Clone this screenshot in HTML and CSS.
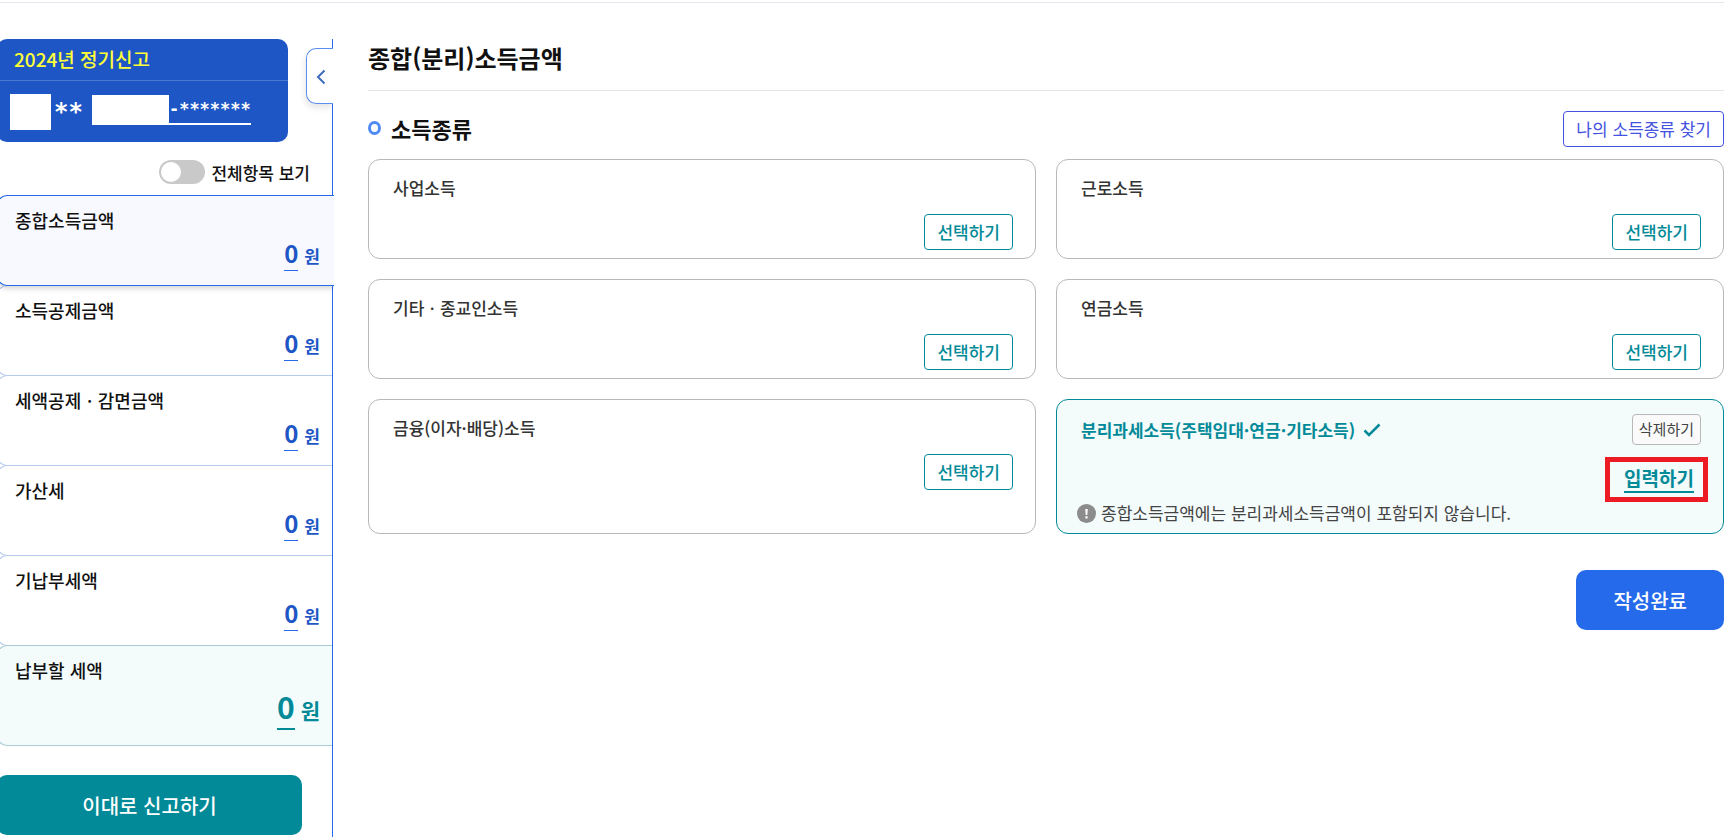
FILE: index.html
```html
<!DOCTYPE html>
<html lang="ko">
<head>
<meta charset="utf-8">
<meta name="viewport" content="width=device-width, initial-scale=1">
<title>종합(분리)소득금액</title>
<link rel="stylesheet" href="styles.css">
</head>
<body>
<div class="page">
  <div class="topline"></div>
  <div class="layout">
    <aside class="sidebar">
      <button class="collapse" type="button" aria-label="접기">
        <svg width="10" height="16" viewBox="0 0 10 16" fill="none" stroke="#3f6cbd" stroke-width="2"><path d="M8.500 1.500 2 8l6.500 6.500"/></svg>
      </button>
      <section class="profile">
        <p class="profile-year">2024년 정기신고</p>
        <div class="profile-id">
          <span class="mask mask-name"></span>
          <span class="name-stars">**</span>
          <a class="reg-no" href="#"><span class="mask mask-no"></span>-*******</a>
        </div>
      </section>
      <label class="toggle-row"><input class="toggle" type="checkbox"><span>전체항목 보기</span></label>
      <nav class="items">
        <div class="item item-active"><span class="item-name">종합소득금액</span><span class="item-value"><a class="num" href="#">0</a>원</span></div>
        <div class="item"><span class="item-name">소득공제금액</span><span class="item-value"><a class="num" href="#">0</a>원</span></div>
        <div class="item"><span class="item-name">세액공제ㆍ감면금액</span><span class="item-value"><a class="num" href="#">0</a>원</span></div>
        <div class="item"><span class="item-name">가산세</span><span class="item-value"><a class="num" href="#">0</a>원</span></div>
        <div class="item"><span class="item-name">기납부세액</span><span class="item-value"><a class="num" href="#">0</a>원</span></div>
        <div class="item item-total"><span class="item-name">납부할 세액</span><span class="item-value"><a class="num" href="#">0</a>원</span></div>
      </nav>
      <button class="report" type="button">이대로 신고하기</button>
    </aside>
    <main class="main">
      <h1 class="title">종합(분리)소득금액</h1>
      <div class="section-head">
        <h2 class="section-title">소득종류</h2>
        <button class="btn btn-find" type="button">나의 소득종류 찾기</button>
      </div>
      <div class="cards">
        <section class="card"><h3 class="card-title">사업소득</h3><button class="btn" type="button">선택하기</button></section>
        <section class="card"><h3 class="card-title">근로소득</h3><button class="btn" type="button">선택하기</button></section>
        <section class="card"><h3 class="card-title">기타ㆍ종교인소득</h3><button class="btn" type="button">선택하기</button></section>
        <section class="card"><h3 class="card-title">연금소득</h3><button class="btn" type="button">선택하기</button></section>
        <section class="card"><h3 class="card-title">금융(이자·배당)소득</h3><button class="btn" type="button">선택하기</button></section>
        <section class="card card-selected">
          <div class="card-head">
            <h3 class="card-title">분리과세소득(주택임대·연금·기타소득)
              <svg width="18" height="14" viewBox="0 0 18 14" fill="none" stroke="#028a98" stroke-width="2.500"><path d="M1.500 7.500 6 12 16.500 1.500"/></svg>
            </h3>
            <button class="btn-delete" type="button">삭제하기</button>
          </div>
          <a class="enter" href="#">입력하기</a>
          <p class="notice">
            <svg width="19" height="19" viewBox="0 0 19 19"><circle cx="9.500" cy="9.500" r="9.500" fill="#8c8c8c"/><path d="M8.200 5h2.600l-.5 6H8.700zM8.400 12.200h2.200v2.300H8.400z" fill="#fff"/></svg>
            <span>종합소득금액에는 분리과세소득금액이 포함되지 않습니다.</span>
          </p>
        </section>
      </div>
      <div class="actions"><button class="submit" type="button">작성완료</button></div>
    </main>
  </div>
</div>
</body>
</html>
```
FILE: styles.css
```css
*, *::before, *::after { box-sizing: border-box; }

body {
  margin: 0;
  overflow: hidden;
  background: #fff;
  color: #111;
  font-family: "Noto Sans CJK KR", "Noto Sans", sans-serif;
  font-size: 17px;
  font-weight: 500;
}

h1, h2, h3, p { margin: 0; font-weight: 500; }
button { font: inherit; cursor: pointer; }
a { color: inherit; text-decoration: none; }

.page {
  display: flex;
  flex-direction: column;
  min-height: 100vh;
  padding-top: 2px;
}

.topline { height: 1px; margin-right: 8px; background: #e5e5ee; }

.layout { display: flex; flex: 1; padding-top: 36px; }

/* Sidebar */
.sidebar {
  position: relative;
  flex: none;
  width: 336px;
  margin-left: -3px;
  border-right: 1px solid #256aeb;
}

.collapse {
  position: absolute;
  top: 9px;
  right: -1px;
  width: 27px;
  height: 56px;
  padding: 2px 0 0 9px;
  border: 1px solid #5b8fee;
  border-right: 0;
  border-radius: 10px 0 0 10px;
  background: #fff;
  box-shadow: -1px 4px 6px rgba(0, 0, 0, .1);
  clip-path: inset(0 0 -12px -8px);
  text-align: left;
}

.profile {
  width: 291px;
  height: 103px;
  border-radius: 10px;
  background: #1e56c5;
  color: #fff;
}

.profile-year {
  padding: 0 17px 2px;
  border-bottom: 1px solid #4b78d1;
  color: #ffff38;
  font-size: 19px;
  line-height: 39px;
}

.profile-id { display: flex; align-items: center; padding: 13px 13px 0; }
.mask { background: #fff; }
.mask-name { width: 41px; height: 36px; }

.name-stars, .reg-no {
  font-family: "DejaVu Sans Mono", monospace;
  font-weight: 700;
}

.name-stars { margin: 0 9px 0 3px; font-size: 24px; line-height: 36px; }

.reg-no {
  display: flex;
  align-items: center;
  margin-bottom: 4px;
  border-bottom: 2px solid #fff;
  font-size: 17px;
  line-height: 28px;
}

.mask-no { width: 77px; height: 28px; }

.toggle-row {
  display: flex;
  align-items: center;
  justify-content: flex-end;
  gap: 6px;
  height: 24px;
  margin: 18px 22px 11px 0;
}

.toggle {
  width: 46px;
  height: 24px;
  margin: 0;
  padding: 2px;
  border-radius: 12px;
  background: #c9c9c9;
  appearance: none;
}

.toggle::before {
  content: "";
  display: block;
  width: 20px;
  height: 20px;
  border-radius: 50%;
  background: #fff;
}

.toggle:checked::before { margin-left: auto; }

.items { display: flex; flex-direction: column; }

.item {
  display: flex;
  flex-direction: column;
  height: 91px;
  margin-bottom: -1px;
  padding: 11px 12px 0 17px;
  border: 1px solid #b7cbed;
  border-right: 0;
  border-radius: 10px 0 0 10px;
}

.item-name { font-size: 18px; line-height: 26px; }

.item-value {
  display: flex;
  align-items: baseline;
  align-self: flex-end;
  gap: 6px;
  color: #1e56c5;
  font-size: 17px;
  font-weight: 700;
  line-height: 34px;
}

.num {
  padding-top: 3px;
  border-bottom: 1px solid #256aeb;
  font-size: 24px;
  line-height: 34px;
}

.item-active {
  z-index: 1;
  margin-right: -2px;
  padding-right: 14px;
  border-color: #256aeb;
  background: #f8f9ff;
  box-shadow: 0 3px 5px rgba(0, 0, 0, .15);
  clip-path: inset(0 0 -8px 0);
}

.item-total {
  height: 101px;
  border-color: #a9ccd2;
  background: #f3fbfb;
}

.item-total .item-value { color: #028a98; font-size: 21px; line-height: 44px; }
.item-total .num { padding-top: 1px; border-bottom: 2px solid #028a98; font-size: 30px; line-height: 44px; }

.report {
  width: 305px;
  height: 60px;
  margin-top: 30px;
  border: 0;
  border-radius: 10px;
  background: #028a98;
  color: #fff;
  font-size: 20px;
}

/* Main content */
.main { flex: 1; min-width: 0; padding: 0 8px 0 35px; }

.title {
  padding-bottom: 13px;
  border-bottom: 1px solid #e2e4ea;
  font-size: 24px;
  font-weight: 700;
  line-height: 38px;
}

.section-head {
  display: flex;
  align-items: center;
  justify-content: space-between;
  margin: 20px 0 12px;
}

.section-title {
  display: flex;
  align-items: center;
  gap: 10px;
  padding-bottom: 2px;
  font-size: 22px;
  font-weight: 700;
  line-height: 34px;
}

.section-title::before {
  content: "";
  width: 13px;
  height: 14px;
  border: 3px solid #4f8bf5;
  border-radius: 50%;
}

.btn {
  height: 36px;
  padding: 0 12px 1px;
  border: 1px solid #028a98;
  border-radius: 4px;
  background: #fff;
  color: #028a98;
  line-height: 32px;
}

.btn-find { border-color: #4452e0; color: #4452e0; font-weight: 400; }

.cards { display: grid; grid-template-columns: 1fr 1fr; gap: 20px; }

.card {
  display: flex;
  flex-direction: column;
  align-items: flex-end;
  min-height: 100px;
  padding: 15px 22px 8px 24px;
  border: 1px solid #b8b8b8;
  border-radius: 12px;
}

.card-title {
  align-self: flex-start;
  margin-bottom: 13px;
  color: #333;
  font-size: 17px;
  line-height: 26px;
}

.card-selected { padding-top: 14px; padding-bottom: 7px; border-color: #028a98; background: #f3fbfb; }

.card-head {
  display: flex;
  align-items: flex-start;
  justify-content: space-between;
  align-self: stretch;
}

.card-head .card-title {
  display: flex;
  align-items: center;
  gap: 8px;
  margin: 0;
  color: #028a98;
  font-weight: 700;
  line-height: 32px;
}

.btn-delete {
  height: 31px;
  padding: 0 6px 2px;
  border: 1px solid #b8b8b8;
  border-radius: 4px;
  background: #fafafa;
  color: #444;
  font-size: 15px;
  font-weight: 400;
  line-height: 26px;
}

.enter {
  position: relative;
  margin: 19px 7px 7px 0;
  border-bottom: 2px solid #028a98;
  color: #028a98;
  font-size: 19px;
  font-weight: 700;
  line-height: 26px;
}

.enter::after {
  content: "";
  position: absolute;
  inset: -8px -14px -11px -19px;
  border: 5px solid #ed1c24;
}

.notice {
  display: flex;
  align-items: center;
  align-self: flex-start;
  gap: 5px;
  margin-left: -4px;
  color: #444;
  font-weight: 400;
  line-height: 26px;
}

.actions { display: flex; justify-content: flex-end; margin-top: 36px; }

.submit {
  height: 60px;
  padding: 0 37px;
  border: 0;
  border-radius: 10px;
  background: #256aeb;
  color: #fff;
  font-size: 20px;
}
```
